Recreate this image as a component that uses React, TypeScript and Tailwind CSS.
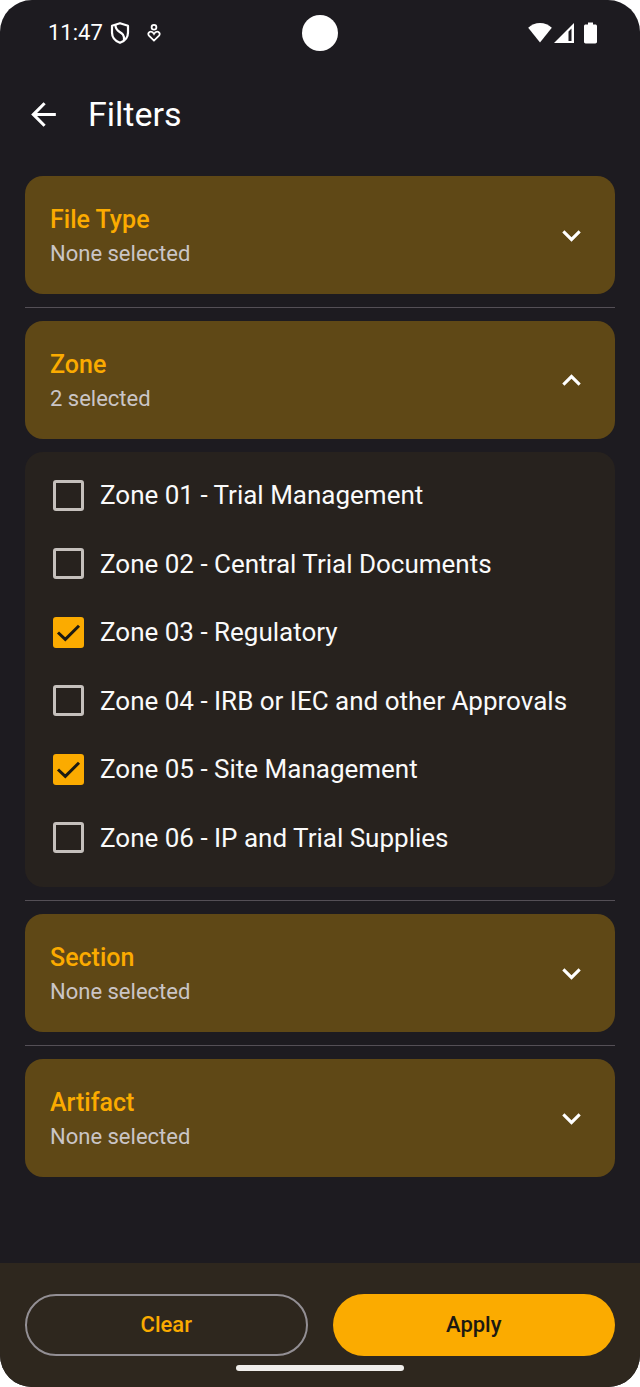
import { useState } from "react";

type Group = { id: string; title: string; options: string[] };

const groups: Group[] = [
  { id: "file-type", title: "File Type", options: [] },
  {
    id: "zone",
    title: "Zone",
    options: [
      "Zone 01 - Trial Management",
      "Zone 02 - Central Trial Documents",
      "Zone 03 - Regulatory",
      "Zone 04 - IRB or IEC and other Approvals",
      "Zone 05 - Site Management",
      "Zone 06 - IP and Trial Supplies",
    ],
  },
  { id: "section", title: "Section", options: [] },
  { id: "artifact", title: "Artifact", options: [] },
];

function StatusBar() {
  return (
    <div className="grid h-[65px] grid-cols-[1fr_auto_1fr] items-center px-[42px] text-white">
      <div className="flex items-center pl-[6px]">
        <span className="text-[22px] leading-7">11:47</span>
        <svg className="ml-[7px] h-6 w-5" viewBox="0 0 20 24" fill="none" stroke="currentColor" strokeWidth="2.2" strokeLinejoin="round">
          <path d="M10 2.200 2 4.800v6.600c0 5 3.400 8.600 8 10.400 4.600-1.800 8-5.400 8-10.400V4.800z" />
          <path d="M5.500 4C5 12.500 15 9.500 14 19" />
        </svg>
        <svg className="ml-[17px] h-5 w-[14px]" viewBox="0 0 14 20" fill="none" stroke="currentColor" strokeWidth="1.8">
          <circle cx="7" cy="4.300" r="2.400" />
          <path d="M7 17.600 2.200 12.900C.2 10.700 2 8.700 3.900 8.700c1.400 0 2.400 1 3.100 2.200.7-1.200 1.700-2.200 3.100-2.200 1.900 0 3.700 2 1.700 4.200z" />
        </svg>
      </div>
      <div className="size-9 rounded-full bg-white" />
      <div className="flex items-center justify-end">
        <svg className="h-6 w-6" viewBox="0 0 24 24" fill="currentColor">
          <path d="M12 21.500.2 6.800C3.400 3.800 7.500 2 12 2s8.600 1.800 11.800 4.800z" />
        </svg>
        <svg className="ml-[2px] h-6 w-5" viewBox="0 0 20 24" fill="currentColor" fillRule="evenodd">
          <path d="M0 22 20 2v20zM14.500 10.500v9.500h3V7.500z" />
        </svg>
        <svg className="ml-[9px] h-6 w-[15px]" viewBox="0 0 15 24" fill="currentColor">
          <path d="M5 1.500h5v2h2.300c1 0 1.700.7 1.700 1.700v15.600c0 1-.7 1.700-1.700 1.700H2.700c-1 0-1.700-.7-1.700-1.700V5.200c0-1 .7-1.700 1.700-1.700H5z" />
        </svg>
      </div>
    </div>
  );
}

function Option({ label, checked, onChange }: { label: string; checked: boolean; onChange: () => void }) {
  return (
    <label className="flex cursor-pointer items-center gap-4 pr-4 pl-7">
      <span className="relative size-[31px] shrink-0">
        <input
          type="checkbox"
          checked={checked}
          onChange={onChange}
          className="block size-full cursor-pointer appearance-none rounded-[3px] border-3 border-[#c5c0bc] checked:border-[#fbab00] checked:bg-[#fbab00]"
        />
        {checked && (
          <svg className="pointer-events-none absolute inset-0 size-full" viewBox="0 0 31 31" fill="none" stroke="#1c1a12" strokeWidth="3">
            <path d="M5 15.500 12.300 22.300 26 8.800" />
          </svg>
        )}
      </span>
      <span className="text-[26px] leading-9 text-[#fafafa]">{label}</span>
    </label>
  );
}

export default function App() {
  const [open, setOpen] = useState("zone");
  const [selected, setSelected] = useState<string[]>(["Zone 03 - Regulatory", "Zone 05 - Site Management"]);

  const toggle = (name: string) =>
    setSelected((now) => (now.includes(name) ? now.filter((n) => n !== name) : [...now, name]));

  return (
    <div className="min-h-screen bg-white font-['Roboto',sans-serif]">
      <div className="flex min-h-screen flex-col overflow-hidden rounded-[32px] bg-[#1d1b20]">
        <StatusBar />
        <header className="flex h-[98px] items-center gap-[26px] px-[25px] text-white">
          <button type="button" aria-label="Back" className="cursor-pointer">
            <svg className="size-[37px]" viewBox="0 0 24 24" fill="currentColor">
              <path d="M20 11H7.830l5.590-5.590L12 4l-8 8 8 8 1.410-1.410L7.830 13H20z" />
            </svg>
          </button>
          <h1 className="text-[34px] leading-[44px]">Filters</h1>
        </header>

        <main className="flex flex-col px-[25px] py-[13px]">
          {groups.map((group, index) => {
            const count = group.options.filter((o) => selected.includes(o)).length;
            const expanded = open === group.id;
            return (
              <section
                key={group.id}
                className={index > 0 ? "mt-[13px] flex flex-col gap-[13px] border-t border-[#544f56] pt-[13px]" : "flex flex-col gap-[13px]"}
              >
                <button
                  type="button"
                  aria-expanded={expanded}
                  onClick={() => setOpen(expanded ? "" : group.id)}
                  className="flex w-full cursor-pointer items-center justify-between rounded-[18px] bg-[#5f4816] p-[25px] text-left"
                >
                  <span className="flex flex-col">
                    <span className="text-[25px] leading-[37px] font-medium text-[#fbab00]">{group.title}</span>
                    <span className="text-[22px] leading-[31px] text-[#cac5c6]">
                      {count > 0 ? `${count} selected` : "None selected"}
                    </span>
                  </span>
                  <svg className="size-[37px] text-white" viewBox="0 0 24 24" fill="currentColor">
                    <path
                      d={
                        expanded
                          ? "M12 8l-6 6 1.410 1.410L12 10.830l4.590 4.580L18 14z"
                          : "M16.590 8.590 12 13.170 7.410 8.590 6 10l6 6 6-6z"
                      }
                    />
                  </svg>
                </button>
                {expanded && group.options.length > 0 && (
                  <div className="grid min-h-[435px] auto-rows-fr rounded-[18px] bg-[#27221e] pt-[9px] pb-[15px]">
                    {group.options.map((o) => (
                      <Option key={o} label={o} checked={selected.includes(o)} onChange={() => toggle(o)} />
                    ))}
                  </div>
                )}
              </section>
            );
          })}
        </main>

        <footer className="mt-auto flex flex-col items-center gap-[9px] bg-[#2e271e] px-[25px] pt-[31px] pb-4">
          <div className="grid w-full grid-cols-2 gap-[25px] text-[22px] leading-8 font-medium">
            <button
              type="button"
              onClick={() => setSelected([])}
              className="h-[62px] cursor-pointer rounded-full border-2 border-[#938f94] text-[#fbab00]"
            >
              Clear
            </button>
            <button type="button" className="h-[62px] cursor-pointer rounded-full bg-[#fbab00] text-[#1c1a12]">
              Apply
            </button>
          </div>
          <div className="h-[6px] w-[168px] rounded-full bg-[#f0eeeb]" />
        </footer>
      </div>
    </div>
  );
}
